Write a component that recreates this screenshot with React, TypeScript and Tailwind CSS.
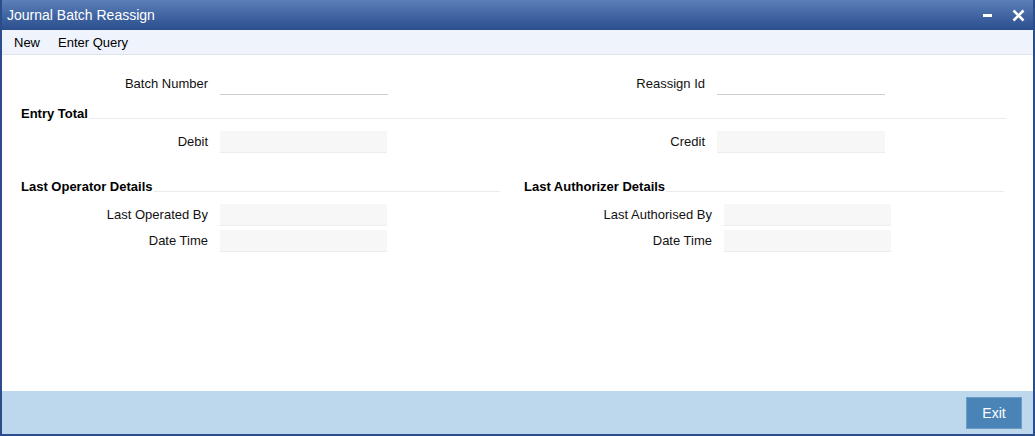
import React from 'react';

const Field: React.FC<{ label: string; labelW: string; inputW: string; kind: 'line' | 'box' }> = ({ label, labelW, inputW, kind }) => (
  <div className="flex items-center h-[22px]">
    <div className={`${labelW} text-right text-[13px] text-[#111]`}>{label}</div>
    <div
      className={`${inputW} ml-[12px] h-[22px] ${
        kind === 'line' ? 'bg-white border-b border-[#cfcfcf]' : 'bg-[#f7f7f7] border-b border-[#ececec]'
      }`}
    />
  </div>
);

const Section: React.FC<{ title: string; className?: string }> = ({ title, className }) => (
  <div className={`flex h-[18px] ${className ?? ''}`}>
    <span className="text-[13px] font-bold leading-[18px] text-black whitespace-nowrap">{title}</span>
    <div className="flex-1 h-px mt-[13px] ml-[1px] bg-[#ebebeb]" />
  </div>
);

const App: React.FC = () => {
  return (
    <div
      className="w-[1035px] h-[436px] flex flex-col bg-white border-x-2 border-b-2 border-[#2c4d8b] overflow-hidden"
      style={{ fontFamily: '"Liberation Sans", Arial, sans-serif' }}
    >
      <div className="h-[30px] -mx-[2px] flex items-center justify-between pl-[7px] pr-[10px] bg-gradient-to-b from-[#5a7fb8] to-[#2b4e8d] text-white text-[14px]">
        <span>Journal Batch Reassign</span>
        <div className="flex items-center gap-[19px]">
          <svg width="10" height="12" viewBox="0 0 10 12">
            <rect x="0" y="5" width="9" height="3" fill="#fff" />
          </svg>
          <svg width="13" height="13" viewBox="0 0 13 13">
            <path d="M1.5 1.5 L11.5 11.5 M11.5 1.5 L1.5 11.5" stroke="#fff" strokeWidth="2.6" />
          </svg>
        </div>
      </div>

      <div className="h-[25px] flex items-center gap-[18px] pl-[12px] pt-[2px] bg-[#eef3fc] border-b border-[#dfe4ec] text-[13px] text-black">
        <span>New</span>
        <span>Enter Query</span>
      </div>

      <div className="flex-1 flex flex-col">
        <div className="flex mt-[18px]">
          <Field label="Batch Number" labelW="w-[206px]" inputW="w-[168px]" kind="line" />
          <Field label="Reassign Id" labelW="w-[317px]" inputW="w-[168px]" kind="line" />
        </div>

        <Section title="Entry Total" className="mt-[10px] pl-[19px] pr-[27px]" />

        <div className="flex mt-[8px]">
          <Field label="Debit" labelW="w-[206px]" inputW="w-[167px]" kind="box" />
          <Field label="Credit" labelW="w-[318px]" inputW="w-[168px]" kind="box" />
        </div>

        <div className="flex mt-[25px]">
          <div className="w-[503px] flex flex-col">
            <Section title="Last Operator Details" className="pl-[19px] pr-[5px]" />
            <div className="mt-[8px]">
              <Field label="Last Operated By" labelW="w-[206px]" inputW="w-[167px]" kind="box" />
            </div>
            <div className="mt-[4px]">
              <Field label="Date Time" labelW="w-[206px]" inputW="w-[167px]" kind="box" />
            </div>
          </div>
          <div className="flex-1 flex flex-col">
            <Section title="Last Authorizer Details" className="pl-[19px] pr-[29px]" />
            <div className="mt-[8px]">
              <Field label="Last Authorised By" labelW="w-[207px]" inputW="w-[167px]" kind="box" />
            </div>
            <div className="mt-[4px]">
              <Field label="Date Time" labelW="w-[207px]" inputW="w-[167px]" kind="box" />
            </div>
          </div>
        </div>
      </div>

      <div className="h-[43px] flex items-start justify-end pr-[11px] pt-[6px] bg-[#bdd8ec]">
        <button className="w-[56px] h-[32px] bg-[#4a84b6] border border-[#6b9cc6] text-white text-[14px]">
          Exit
        </button>
      </div>
    </div>
  );
};

export default App;
